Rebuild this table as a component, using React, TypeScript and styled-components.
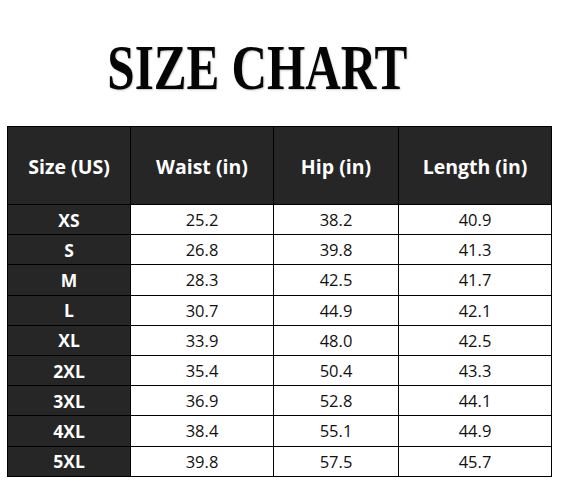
import React from "react";
import styled, { createGlobalStyle } from "styled-components";

const Global = createGlobalStyle`
  html, body { margin: 0; padding: 0; background: #ffffff; }
  body { font-family: "Open Sans", "Noto Sans", sans-serif; }
`;

const Page = styled.div`
  width: 562px;
  height: 483px;
  padding-top: 37px;
  box-sizing: border-box;
  display: flex;
  flex-direction: column;
  align-items: flex-start;
`;

const TitleRow = styled.div`
  width: 515px;
  height: 63px;
  display: flex;
  justify-content: center;
`;

const Title = styled.h1`
  margin: 0;
  font-family: "Liberation Serif", "Times New Roman", serif;
  font-weight: 700;
  font-size: 63px;
  line-height: 1;
  color: #050505;
  white-space: nowrap;
  transform: scaleX(0.78);
  text-shadow: 1px 1px 2px rgba(0, 0, 0, 0.22);
`;

const Grid = styled.div`
  margin: 26px 0 0 7px;
  width: 545px;
  box-sizing: border-box;
  display: grid;
  grid-template-columns: 122px 142px 124px 152px;
  grid-template-rows: 77px repeat(9, 29.2px);
  gap: 1px;
  padding: 1px;
  background: #000000;
`;

const HeadCell = styled.div`
  background: #262626;
  color: #ffffff;
  font-weight: 700;
  font-size: 19.5px;
  display: flex;
  align-items: center;
  justify-content: center;
  padding-top: 2px;
  box-sizing: border-box;
  white-space: nowrap;
`;

const SizeCell = styled.div`
  background: #262626;
  color: #ffffff;
  font-weight: 700;
  font-size: 17.5px;
  display: flex;
  align-items: center;
  justify-content: center;
`;

const Cell = styled.div`
  background: #ffffff;
  color: #111111;
  font-size: 16.5px;
  display: flex;
  align-items: center;
  justify-content: center;
`;

const headers = ["Size (US)", "Waist (in)", "Hip (in)", "Length (in)"];
const rows: [string, string, string, string][] = [
  ["XS", "25.2", "38.2", "40.9"],
  ["S", "26.8", "39.8", "41.3"],
  ["M", "28.3", "42.5", "41.7"],
  ["L", "30.7", "44.9", "42.1"],
  ["XL", "33.9", "48.0", "42.5"],
  ["2XL", "35.4", "50.4", "43.3"],
  ["3XL", "36.9", "52.8", "44.1"],
  ["4XL", "38.4", "55.1", "44.9"],
  ["5XL", "39.8", "57.5", "45.7"],
];

export default function App() {
  return (
    <>
      <Global />
      <Page>
        <TitleRow>
          <Title>SIZE CHART</Title>
        </TitleRow>
        <Grid>
          {headers.map((h) => (
            <HeadCell key={h}>{h}</HeadCell>
          ))}
          {rows.map((r) => (
            <React.Fragment key={r[0]}>
              <SizeCell>{r[0]}</SizeCell>
              <Cell>{r[1]}</Cell>
              <Cell>{r[2]}</Cell>
              <Cell>{r[3]}</Cell>
            </React.Fragment>
          ))}
        </Grid>
      </Page>
    </>
  );
}
